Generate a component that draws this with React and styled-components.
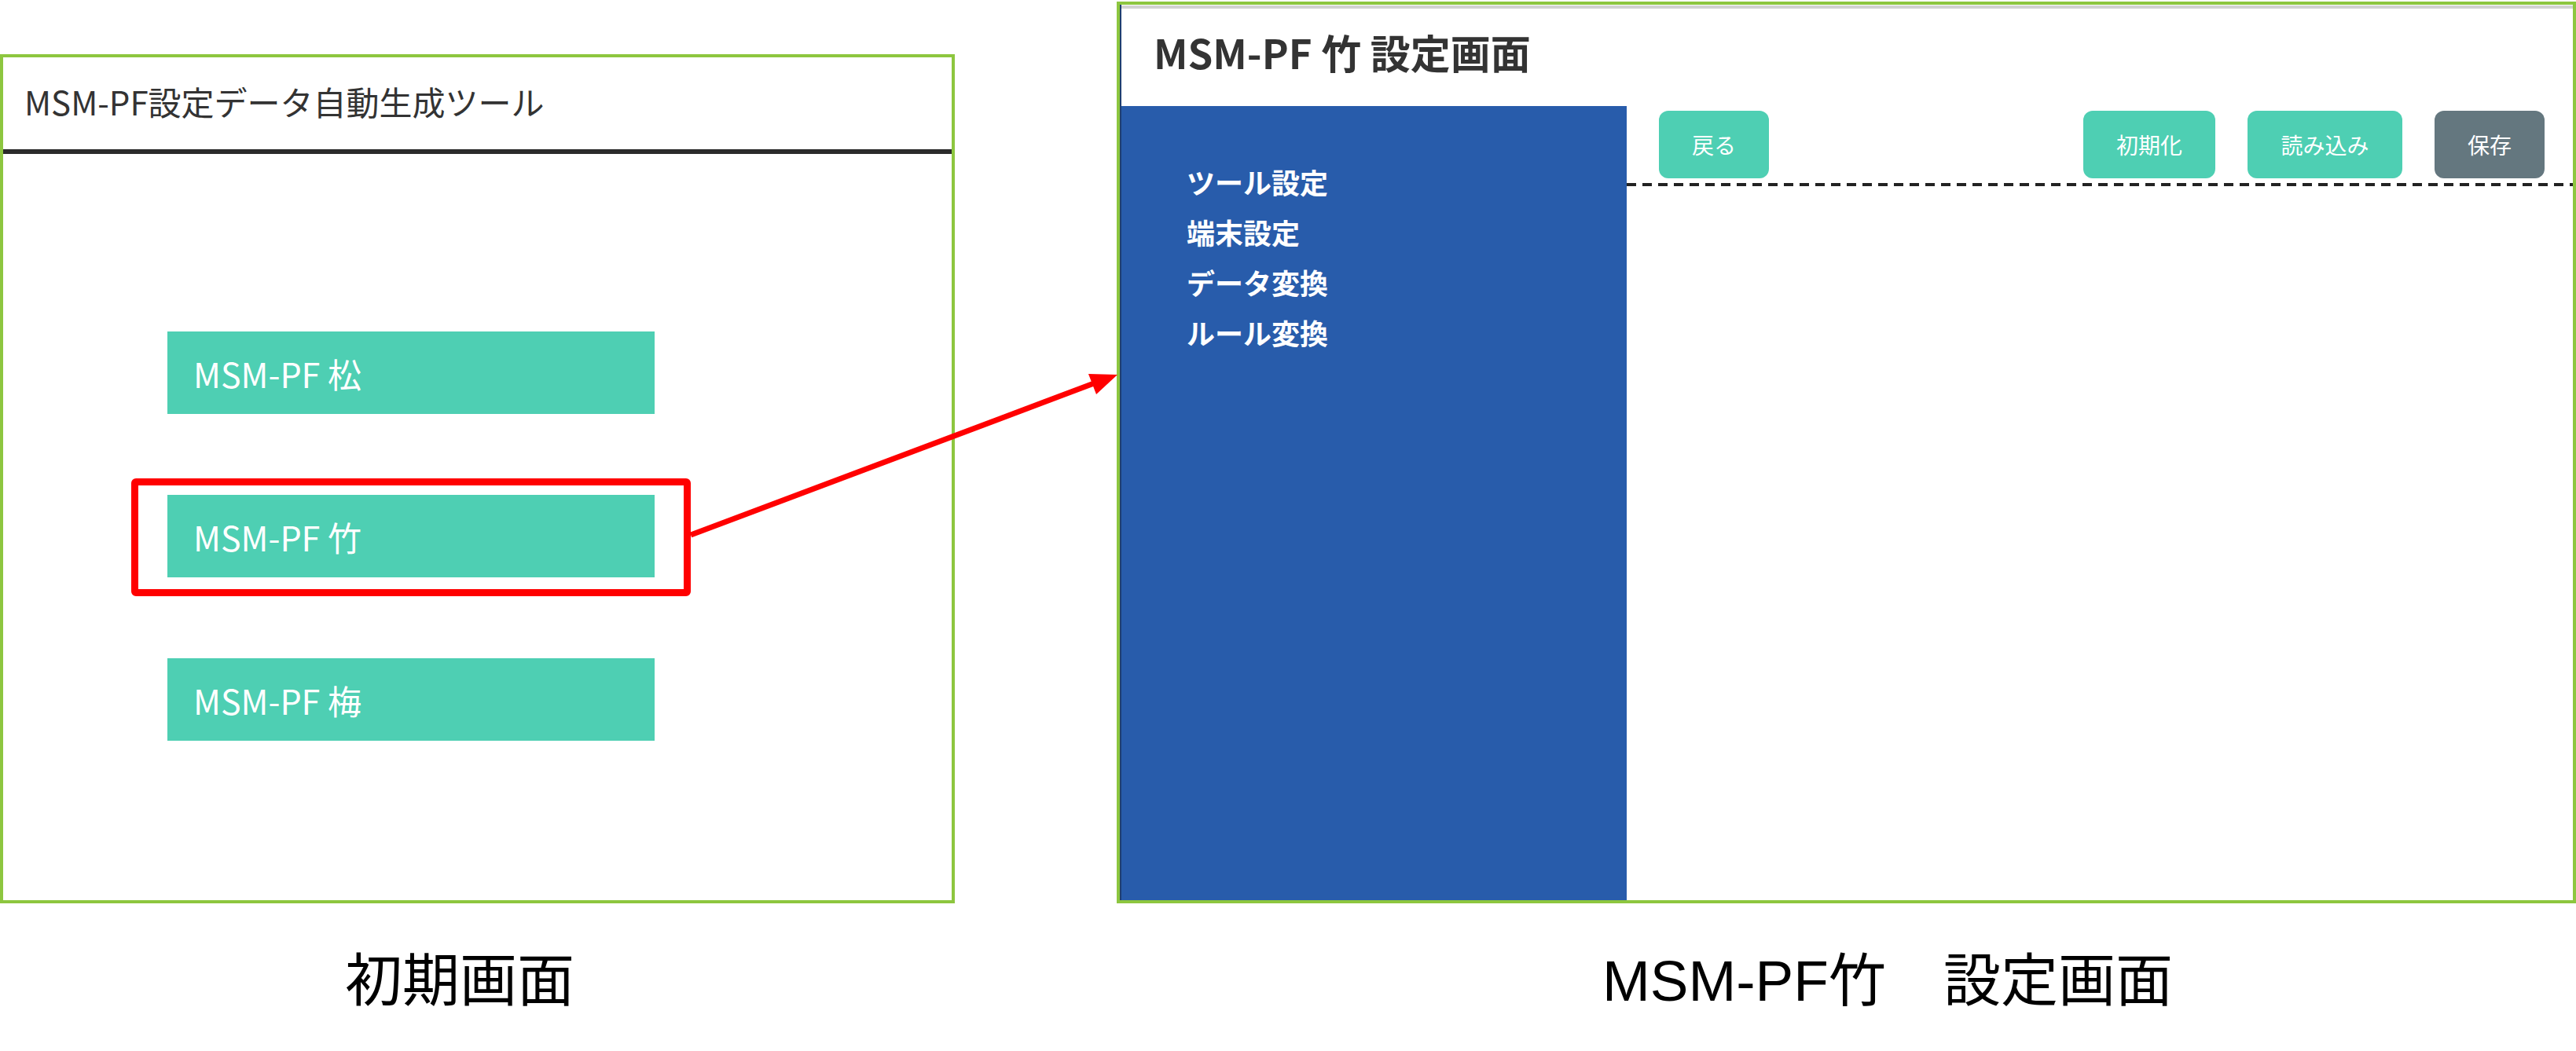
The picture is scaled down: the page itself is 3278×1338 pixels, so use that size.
import styled, { createGlobalStyle } from "styled-components";

const colors = {
  frame: "#8dc63f",
  teal: "#4ecfb3",
  blue: "#285cab",
  slate: "#64777f",
  dark: "#333333",
  red: "#ff0000",
};

const GlobalStyle = createGlobalStyle`
  html, body {
    margin: 0;
    padding: 0;
    background: #ffffff;
  }
  body {
    width: 3278px;
    height: 1338px;
    overflow: hidden;
    font-family: "Noto Sans CJK JP", "Noto Sans", sans-serif;
  }
  * {
    box-sizing: border-box;
  }
`;

const menuItems = ["ツール設定", "端末設定", "データ変換", "ルール変換"];
const products = ["松", "竹", "梅"];

export default function App() {
  return (
    <>
      <GlobalStyle />
      <Page>
        <StartFrame>
          <StartHeader>MSM-PF設定データ自動生成ツール</StartHeader>
          <StartBody>
            {products.map((name) => (
              <ProductButton key={name}>
                MSM-PF {name}
                {name === "竹" && <Highlight />}
              </ProductButton>
            ))}
          </StartBody>
        </StartFrame>

        <SettingsFrame>
          <SettingsInner>
            <TopStrip />
            <SettingsHeader>MSM-PF 竹 設定画面</SettingsHeader>
            <SettingsBody>
              <Sidebar>
                {menuItems.map((item) => (
                  <MenuItem key={item}>{item}</MenuItem>
                ))}
              </Sidebar>
              <Main>
                <Toolbar>
                  <ActionButton $width={140}>戻る</ActionButton>
                  <RightGroup>
                    <ActionButton $width={168}>初期化</ActionButton>
                    <ActionButton $width={197}>読み込み</ActionButton>
                    <ActionButton $width={140} $variant="save">
                      保存
                    </ActionButton>
                  </RightGroup>
                </Toolbar>
                <DashedRule />
              </Main>
            </SettingsBody>
          </SettingsInner>
        </SettingsFrame>

        <Caption $indent={439}>初期画面</Caption>
        <Caption $indent={618}>MSM-PF竹　設定画面</Caption>

        <ArrowLayer viewBox="0 0 3278 1338" width="3278" height="1338">
          <line x1="879" y1="681" x2="1392" y2="488" stroke={colors.red} strokeWidth="7" />
          <polygon points="1422,477 1395,502 1385,476" fill={colors.red} />
        </ArrowLayer>
      </Page>
    </>
  );
}

const Page = styled.div`
  position: relative;
  width: 3278px;
  height: 1338px;
  display: grid;
  grid-template-columns: 1215px 1857px;
  grid-template-rows: 1150px 1fr;
  column-gap: 206px;
`;

const StartFrame = styled.section`
  align-self: end;
  height: 1081px;
  border: 4px solid ${colors.frame};
  display: flex;
  flex-direction: column;
`;

const StartHeader = styled.div`
  height: 123px;
  padding: 0 0 6px 27px;
  display: flex;
  align-items: center;
  font-size: 42px;
  color: ${colors.dark};
  border-bottom: 6px solid #2b2b2b;
`;

const StartBody = styled.div`
  display: flex;
  flex-direction: column;
  gap: 103px;
  padding: 226px 0 0 209px;
`;

const ProductButton = styled.div`
  position: relative;
  width: 620px;
  height: 105px;
  padding-left: 33px;
  display: flex;
  align-items: center;
  background: ${colors.teal};
  color: #ffffff;
  font-size: 43px;
`;

const Highlight = styled.span`
  position: absolute;
  top: -21px;
  left: -46px;
  right: -46px;
  bottom: -24px;
  border: 9px solid ${colors.red};
  border-radius: 6px;
  pointer-events: none;
`;

const SettingsFrame = styled.section`
  align-self: end;
  height: 1148px;
  border: 4px solid ${colors.frame};
`;

const SettingsInner = styled.div`
  height: 100%;
  display: flex;
  flex-direction: column;
  border-left: 2px solid #1f3f70;
`;

const TopStrip = styled.div`
  height: 4px;
  margin-top: 1px;
  background: #d2d2d2;
`;

const SettingsHeader = styled.div`
  height: 124px;
  padding: 0 0 14px 41px;
  display: flex;
  align-items: center;
  font-size: 51px;
  font-weight: 700;
  color: ${colors.dark};
`;

const SettingsBody = styled.div`
  flex: 1;
  display: flex;
`;

const Sidebar = styled.nav`
  width: 643px;
  background: ${colors.blue};
  padding: 64px 0 0 83px;
  display: flex;
  flex-direction: column;
`;

const MenuItem = styled.div`
  height: 64px;
  line-height: 64px;
  font-size: 36px;
  font-weight: 700;
  color: #ffffff;
`;

const Main = styled.div`
  flex: 1;
  display: flex;
  flex-direction: column;
`;

const Toolbar = styled.div`
  display: flex;
  align-items: center;
  padding: 6px 36px 0 41px;
`;

const RightGroup = styled.div`
  margin-left: auto;
  display: flex;
  gap: 41px;
`;

const ActionButton = styled.button`
  width: ${(p) => p.$width}px;
  height: 86px;
  border: none;
  border-radius: 12px;
  background: ${(p) => (p.$variant === "save" ? colors.slate : colors.teal)};
  color: #ffffff;
  font-family: "Noto Sans CJK JP", sans-serif;
  font-size: 28px;
  cursor: pointer;
`;

const DashedRule = styled.div`
  margin-top: 6px;
  height: 4px;
  background-image: repeating-linear-gradient(
    to right,
    #222222 0 12px,
    transparent 12px 20px
  );
`;

const Caption = styled.div`
  padding: 63px 0 0 ${(p) => p.$indent}px;
  font-family: "Liberation Sans", "Noto Sans CJK JP", sans-serif;
  font-size: 73px;
  line-height: 72px;
  color: #000000;
  white-space: nowrap;
`;

const ArrowLayer = styled.svg`
  position: absolute;
  left: 0;
  top: 0;
  pointer-events: none;
`;
